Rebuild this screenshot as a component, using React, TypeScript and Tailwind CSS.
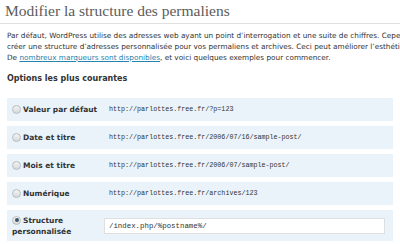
const sans = "font-['DejaVu_Sans',Verdana,sans-serif]";
const mono = "font-['Liberation_Mono','Courier_New',monospace]";

type Option = { label: string; url: string };

const options: Option[] = [
  { label: "Valeur par défaut", url: "http://parlottes.free.fr/?p=123" },
  { label: "Date et titre", url: "http://parlottes.free.fr/2006/07/16/sample-post/" },
  { label: "Mois et titre", url: "http://parlottes.free.fr/2006/07/sample-post/" },
  { label: "Numérique", url: "http://parlottes.free.fr/archives/123" },
];

const Radio = ({ checked = false }: { checked?: boolean }) => (
  <span className="flex size-[9px] shrink-0 items-center justify-center rounded-full border border-[#b9bdc0] bg-gradient-to-b from-[#f4f4f4] to-[#d6d9db]">
    {checked && <span className="size-[4px] rounded-full bg-[#3f5565]" />}
  </span>
);

export default function App() {
  return (
    <div className={`h-[244px] w-[400px] overflow-hidden bg-white text-[#333] ${sans}`}>
      <h2 className="whitespace-nowrap border-b border-[#e0e0e0] pb-[3px] pl-[5px] pt-[1px] font-['Liberation_Serif',Georgia,serif] text-[15.5px] leading-[19px] text-[#5b5b5b]">
        Modifier la structure des permaliens
      </h2>
      <p className="mt-[6px] whitespace-nowrap pl-[7px] text-[7.3px] leading-[11px]">
        Par défaut, WordPress utilise des adresses web ayant un point d’interrogation et une suite de chiffres. Cependant, WordPress vous permet de
        <br />
        créer une structure d’adresses personnalisée pour vos permaliens et archives. Ceci peut améliorer l’esthétique
        <br />
        De{" "}
        <a href="#" className="text-[#2583ad] underline">
          nombreux marqueurs sont disponibles
        </a>
        , et voici quelques exemples pour commencer.
      </p>
      <h3 className="mt-[10px] pl-[7px] text-[8px] font-bold leading-[12px] text-[#333]">
        Options les plus courantes
      </h3>
      <div className="mx-[7px] mt-[13px] flex flex-col gap-[5px]">
        {options.map((o) => (
          <div key={o.label} className="flex h-[23px] items-center bg-[#eaf3fa] pl-[5px]">
            <Radio />
            <span className="w-[88px] shrink-0 pl-[2px] text-[7.5px] font-bold text-[#333]">{o.label}</span>
            <span className={`${mono} whitespace-nowrap text-[6.7px] text-[#333]`}>{o.url}</span>
          </div>
        ))}
        <div className="flex h-[31px] items-center bg-[#eaf3fa] pl-[5px]">
          <div className="flex w-[92px] shrink-0 flex-col self-center">
            <div className="flex items-center">
              <Radio checked />
              <span className="pl-[2px] text-[7.5px] font-bold leading-[11px]">Structure</span>
            </div>
            <span className="text-[7.5px] font-bold leading-[11px]">personnalisée</span>
          </div>
          <input
            readOnly
            value="/index.php/%postname%/"
            className={`${mono} h-[16px] w-[281px] border border-[#dfdfdf] bg-white px-[4px] text-[7.4px] text-[#333] outline-none`}
          />
        </div>
      </div>
    </div>
  );
}
